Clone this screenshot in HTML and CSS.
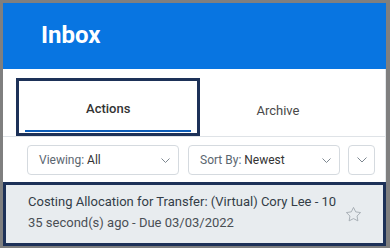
FILE: index.html
```html
<!DOCTYPE html>
<html lang="en">
<head>
    <meta charset="UTF-8">
    <meta name="viewport" content="width=device-width, initial-scale=1.0">
    <title>Inbox</title>
    <link rel="stylesheet" href="styles.css">
</head>
<body>
    <div class="app">
        <header class="top-bar">
            <h1>Inbox</h1>
        </header>
        <div class="panel">
            <nav class="tabs">
                <div class="tab tab-active">
                    <span class="tab-label">Actions</span>
                    <span class="tab-underline"></span>
                </div>
                <div class="tab tab-archive">
                    <span class="tab-label">Archive</span>
                </div>
            </nav>
            <div class="filters">
                <div class="select select-wide">
                    <span class="select-text"><span class="select-key">Viewing:</span> All</span>
                    <svg class="chevron" width="9" height="5" viewBox="0 0 9 5"><polyline points="0.5,0.5 4.5,4.5 8.5,0.5" /></svg>
                </div>
                <div class="select select-wide">
                    <span class="select-text"><span class="select-key">Sort By:</span> Newest</span>
                    <svg class="chevron" width="9" height="5" viewBox="0 0 9 5"><polyline points="0.5,0.5 4.5,4.5 8.5,0.5" /></svg>
                </div>
                <div class="select select-icon">
                    <svg class="chevron" width="10" height="6" viewBox="0 0 10 6"><polyline points="0.5,0.5 5,5 9.5,0.5" /></svg>
                </div>
            </div>
        </div>
        <div class="task-card">
            <div class="task-text">
                <div class="task-title">Costing Allocation for Transfer: (Virtual) Cory Lee - 10</div>
                <div class="task-meta">35 second(s) ago - Due 03/03/2022</div>
            </div>
            <svg class="star" width="17" height="17" viewBox="0 0 24 24">
                <polygon points="12 2 15.09 8.26 22 9.27 17 14.14 18.18 21.02 12 17.77 5.82 21.02 7 14.14 2 9.27 8.91 8.26" />
            </svg>
        </div>
    </div>
</body>
</html>
```

FILE: styles.css
```css
body {
    margin: 0;
    padding: 3px 4px 2px 3px;
    background-color: #7f7f7f; /* screenshot frame */
    font-family: Roboto, "Liberation Sans", sans-serif;
}

.app {
    height: 243px;
    background-color: #fff;
    display: flex;
    flex-direction: column;
}

.top-bar {
    height: 66px;
    box-sizing: border-box;
    padding: 20px 0 0 38px;
    background-color: #0875e1;
}

.top-bar h1 {
    margin: 0;
    font-size: 24px;
    line-height: 24px;
    font-weight: 700;
    color: #fff;
}

.panel {
    border-right: 1px solid #e3e7ea;
}

.tabs {
    display: flex;
    padding: 9px 0 0 13px;
    border-bottom: 1px solid #dfe3e7;
}

.tab {
    box-sizing: border-box;
    width: 185px;
    height: 58px;
    font-size: 13px;
    line-height: 16px;
    color: #494949;
}

.tab-active {
    display: flex;
    flex-direction: column;
    align-items: center;
    justify-content: space-between;
    padding-top: 20px;
    border: 3px solid #1d3158;
    font-weight: 500;
    color: #333;
}

.tab-underline {
    align-self: stretch;
    height: 2px;
    margin: 0 6px 1px 6px;
    background-color: #0b5cb8;
}

.tab-archive {
    padding: 25px 0 0 56px;
}

.filters {
    display: flex;
    padding: 8px 0 7px 24px;
}

.select {
    box-sizing: border-box;
    height: 30px;
    border: 1px solid #d5dadf;
    border-radius: 4px;
    display: flex;
    align-items: center;
    margin-right: 9px;
}

.select-wide {
    width: 152px;
    padding: 0 8px 0 11px;
    justify-content: space-between;
}

.select-icon {
    width: 27px;
    justify-content: center;
    margin-left: -1px;
}

.select-text {
    font-size: 12px;
    color: #333;
    padding-bottom: 1px;
}

.select-key {
    color: #5b6670;
}

.chevron {
    fill: none;
    stroke: #7d8790;
    stroke-width: 1;
}

.task-card {
    flex: 1;
    display: flex;
    align-items: center;
    justify-content: space-between;
    padding: 0 21px 0 22px;
    border: 3px solid #1d3158;
    background-color: #e8ecef;
}

.task-text {
    padding-bottom: 3px;
}

.task-title {
    font-size: 13px;
    line-height: 20px;
    color: #333d47;
}

.task-meta {
    margin-top: 1px;
    font-size: 13px;
    line-height: 20px;
    color: #4a4f55;
}

.star {
    fill: none;
    stroke: #a3abb2;
    stroke-width: 1.3;
    stroke-linejoin: round;
}
```
